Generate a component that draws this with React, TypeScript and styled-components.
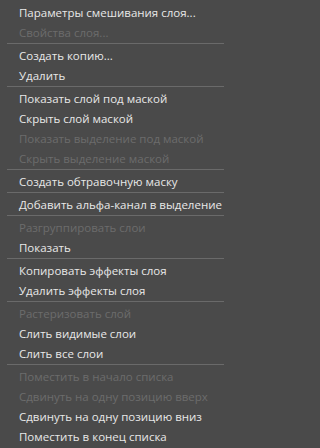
import styled, { createGlobalStyle } from 'styled-components';

type Entry = { label: string; disabled?: boolean } | 'sep';

const entries: Entry[] = [
    { label: 'Параметры смешивания слоя...' },
    { label: 'Свойства слоя...', disabled: true },
    'sep',
    { label: 'Создать копию...' },
    { label: 'Удалить' },
    'sep',
    { label: 'Показать слой под маской' },
    { label: 'Скрыть слой маской' },
    { label: 'Показать выделение под маской', disabled: true },
    { label: 'Скрыть выделение маской', disabled: true },
    'sep',
    { label: 'Создать обтравочную маску' },
    'sep',
    { label: 'Добавить альфа-канал в выделение' },
    'sep',
    { label: 'Разгруппировать слои', disabled: true },
    { label: 'Показать' },
    'sep',
    { label: 'Копировать эффекты слоя' },
    { label: 'Удалить эффекты слоя' },
    'sep',
    { label: 'Растеризовать слой', disabled: true },
    { label: 'Слить видимые слои' },
    { label: 'Слить все слои' },
    'sep',
    { label: 'Поместить в начало списка', disabled: true },
    { label: 'Сдвинуть на одну позицию вверх', disabled: true },
    { label: 'Сдвинуть на одну позицию вниз' },
    { label: 'Поместить в конец списка' },
];

const App: React.FC = () => {
    return (
        <>
            <GlobalStyle />
            <StyledMenu>
                {entries.map((entry, i) =>
                    entry === 'sep' ? (
                        <StyledSeparator key={i} />
                    ) : (
                        <StyledItem key={i} disabled={entry.disabled}>
                            {entry.label}
                        </StyledItem>
                    )
                )}
            </StyledMenu>
        </>
    );
};

const GlobalStyle = createGlobalStyle`
    html, body {
        margin: 0;
        padding: 0;
        background-color: #4a4a4a;
    }
`;

const StyledMenu = styled.div`
    display: flex;
    flex-direction: column;
    width: 229px;
    height: 448px;
    box-sizing: border-box;
    padding: 3px 0px 1px 0px;
    background-color: #4a4a4a;
    font-family: 'Open Sans', 'Noto Sans', sans-serif;
    font-size: 11.5px;
`;

const StyledItem = styled.div<{ disabled?: boolean }>`
    display: flex;
    align-items: center;
    height: 20px;
    padding-left: 19px;
    padding-bottom: 1px;
    box-sizing: border-box;
    white-space: nowrap;
    color: ${({ disabled }) => (disabled ? '#6c6c6c' : '#e8e8e8')};
`;

const StyledSeparator = styled.div`
    height: 1px;
    margin: 0px 5px 2px 7px;
    background-color: #6a6a6a;
`;

export default App;
